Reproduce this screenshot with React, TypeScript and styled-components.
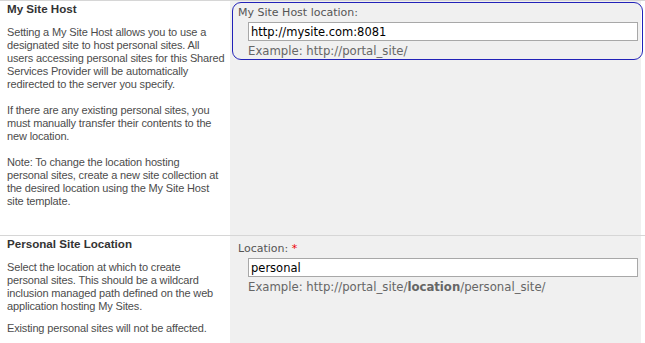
import React from 'react'
import styled, { createGlobalStyle } from 'styled-components'

const Global = createGlobalStyle`
  html, body {
    margin: 0;
    padding: 0;
    background: #fff;
  }
`

const Page = styled.div`
  width: 645px;
  height: 343px;
  overflow: hidden;
  background: #fff;
`

const Section = styled.div<{ height: number }>`
  display: grid;
  grid-template-columns: 230px 411px;
  height: ${(p) => p.height}px;
  border-top: 1px solid #d6d6d6;
`

const Info = styled.div`
  padding: 1px 0 0 7px;
  font-family: 'Liberation Sans', Arial, sans-serif;
  font-size: 11px;
  line-height: 13px;
  color: #4c4c4c;
`

const Title = styled.div`
  font-weight: bold;
  font-size: 11.6px;
  color: #333;
  margin-bottom: 11px;
`

const Para = styled.p<{ gap?: number }>`
  margin: 0 0 ${(p) => p.gap ?? 13}px;
  white-space: nowrap;
  letter-spacing: -0.15px;
`

const Controls = styled.div`
  background: #f0f0f0;
  padding: 1px 0 0 2px;
  font-family: 'DejaVu Sans', Verdana, sans-serif;
  font-size: 11px;
  color: #555;
`

const Highlight = styled.div`
  border: 1px solid #2222b8;
  border-radius: 9px;
  height: 58px;
  box-sizing: border-box;
  width: 411px;
  padding: 3px 0 0 5px;
`

const Plain = styled.div`
  padding: 5px 0 0 6px;
`

const Label = styled.div`
  line-height: 13px;
  margin-bottom: 3px;
`

const Required = styled.span`
  color: #e00;
`

const TextBox = styled.input`
  display: block;
  box-sizing: border-box;
  width: 390px;
  height: 19px;
  margin: 0 0 0 10px;
  padding: 0 2px;
  border: 1px solid #a8a8a8;
  background: #fff;
  font-family: 'DejaVu Sans', Verdana, sans-serif;
  font-size: 11.5px;
  color: #000;
  outline: none;
`

const Example = styled.div`
  margin: 4px 0 0 10px;
  font-size: 11.7px;
  line-height: 13px;
  color: #666;
`

export default function App() {
  return (
    <Page>
      <Global />
      <Section height={234}>
        <Info>
          <Title>My Site Host</Title>
          <Para>
            Setting a My Site Host allows you to use a<br />
            designated site to host personal sites. All<br />
            users accessing personal sites for this Shared<br />
            Services Provider will be automatically<br />
            redirected to the server you specify.
          </Para>
          <Para>
            If there are any existing personal sites, you<br />
            must manually transfer their contents to the<br />
            new location.
          </Para>
          <Para>
            Note: To change the location hosting<br />
            personal sites, create a new site collection at<br />
            the desired location using the My Site Host<br />
            site template.
          </Para>
        </Info>
        <Controls>
          <Highlight>
            <Label>My Site Host location:</Label>
            <TextBox defaultValue="http://mysite.com:8081" />
            <Example>Example: http://portal_site/</Example>
          </Highlight>
        </Controls>
      </Section>
      <Section height={108}>
        <Info>
          <Title>Personal Site Location</Title>
          <Para gap={9}>
            Select the location at which to create<br />
            personal sites. This should be a wildcard<br />
            inclusion managed path defined on the web<br />
            application hosting My Sites.
          </Para>
          <Para>Existing personal sites will not be affected.</Para>
        </Info>
        <Controls>
          <Plain>
            <Label>
              Location: <Required>*</Required>
            </Label>
            <TextBox defaultValue="personal" />
            <Example>
              Example: http://portal_site/<b>location</b>/personal_site/
            </Example>
          </Plain>
        </Controls>
      </Section>
    </Page>
  )
}
